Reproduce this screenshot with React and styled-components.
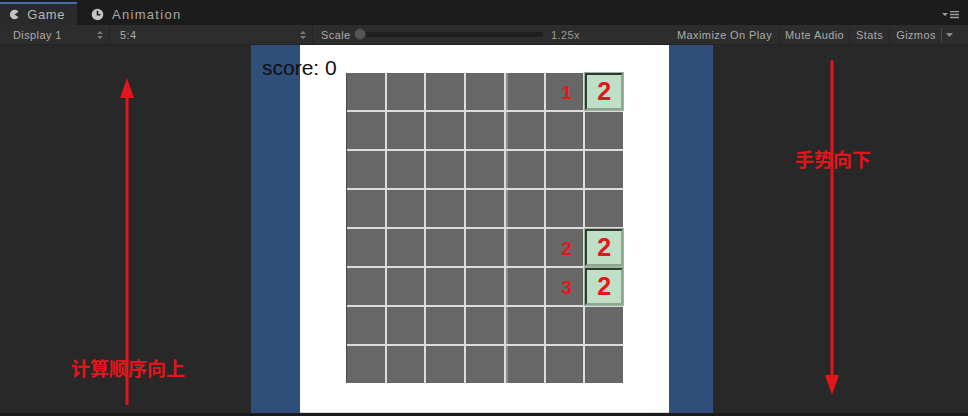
import React from "react";
import styled, { createGlobalStyle } from "styled-components";

const GlobalStyle = createGlobalStyle`
  html, body {
    margin: 0;
    padding: 0;
    background: #282828;
    overflow: hidden;
  }
  body {
    font-family: "Liberation Sans", Arial, sans-serif;
  }
`;

const ROWS = 8;
const COLS = 7;
const tiles = { "0-6": 2, "4-6": 2, "5-6": 2 };
const marks = { "0-5": 1, "4-5": 2, "5-5": 3 };

function GameIcon() {
  return (
    <svg width="13" height="13" viewBox="0 0 13 13">
      <path d="M11 3.2A5.5 5.5 0 1 0 11 9.8L6.5 6.5Z" fill="#c4c4c4" />
    </svg>
  );
}

function ClockIcon() {
  return (
    <svg width="13" height="13" viewBox="0 0 13 13">
      <circle cx="6.5" cy="6.5" r="5.8" fill="#c4c4c4" />
      <path d="M6.5 2.8V6.8H9.4" stroke="#1e1e1e" strokeWidth="1.6" fill="none" />
    </svg>
  );
}

function UpDown() {
  return (
    <svg width="6" height="10" viewBox="0 0 6 10">
      <path d="M0 4L3 1L6 4Z M0 6L3 9L6 6Z" fill="#7a7a7a" />
    </svg>
  );
}

function App() {
  return (
    <>
      <GlobalStyle />
      <Window>
        <TabBar>
          <Tab $active>
            <GameIcon />
            Game
          </Tab>
          <Tab>
            <ClockIcon />
            Animation
          </Tab>
          <TabMenu>
            <svg width="18" height="8" viewBox="0 0 18 8">
              <path d="M0 2L3 5L6 2Z" fill="#a0a0a0" />
              <path d="M8 0.5H17M8 3.5H17M8 6.5H17" stroke="#a0a0a0" strokeWidth="1.4" />
            </svg>
          </TabMenu>
        </TabBar>

        <Toolbar>
          <Dropdown $width={110} $pad={13}>
            Display 1
            <UpDown />
          </Dropdown>
          <Dropdown $width={203} $pad={10}>
            5:4
            <UpDown />
          </Dropdown>
          <ScaleGroup>
            <ScaleLabel>Scale</ScaleLabel>
            <Track>
              <Thumb />
            </Track>
            <ScaleValue>1.25x</ScaleValue>
          </ScaleGroup>
          <ToolButton $pad={7}>Maximize On Play</ToolButton>
          <ToolButton $pad={5}>Mute Audio</ToolButton>
          <ToolButton $pad={6}>Stats</ToolButton>
          <ToolButton $pad={6} $noBorder>
            Gizmos
            <GizmoArrow>
              <svg width="7" height="4" viewBox="0 0 7 4">
                <path d="M0 0L3.5 4L7 0Z" fill="#8a8a8a" />
              </svg>
            </GizmoArrow>
          </ToolButton>
        </Toolbar>

        <Main>
          <SidePane $width={251} />
          <GameView>
            <Screen>
              <Board>
                {Array.from({ length: ROWS }).map((_, r) =>
                  Array.from({ length: COLS }).map((__, c) => {
                    const key = `${r}-${c}`;
                    return (
                      <Cell key={key} $light={c === 4}>
                        {tiles[key] && <Tile>{tiles[key]}</Tile>}
                        {marks[key] && <Mark>{marks[key]}</Mark>}
                      </Cell>
                    );
                  })
                )}
              </Board>
            </Screen>
            <Score>score: 0</Score>
          </GameView>
          <SidePane $width={255} />

          <Arrows width="968" height="368" viewBox="0 0 968 368">
            <rect x="125.5" y="50" width="3" height="310" fill="#e3151c" />
            <path d="M127 33L120 53H134Z" fill="#e3151c" />
            <rect x="830.5" y="15" width="3" height="318" rx="1.5" fill="#e3151c" />
            <path d="M832 350L825 330H839Z" fill="#e3151c" />
          </Arrows>
          <Note $left={71} $top={312}>计算顺序向上</Note>
          <Note $left={795} $top={103}>手势向下</Note>
        </Main>
        <Footer />
      </Window>
    </>
  );
}

export default App;

const Window = styled.div`
  width: 968px;
  height: 416px;
  display: flex;
  flex-direction: column;
  background: #282828;
`;

const TabBar = styled.div`
  height: 25px;
  display: flex;
  align-items: flex-end;
  background: #1c1c1c;
  position: relative;
`;

const Tab = styled.div`
  height: ${(p) => (p.$active ? "21px" : "22px")};
  display: flex;
  align-items: center;
  gap: ${(p) => (p.$active ? "7px" : "8px")};
  padding: ${(p) => (p.$active ? "0 12px 0 9px" : "0 12px 0 14px")};
  width: ${(p) => (p.$active ? "56px" : "auto")};
  background: ${(p) => (p.$active ? "#2a2a2a" : "transparent")};
  border-top: ${(p) => (p.$active ? "2px solid #3f6ea8" : "none")};
  color: ${(p) => (p.$active ? "#b8b8b8" : "#a8a8a8")};
  font-size: 13px;
  letter-spacing: ${(p) => (p.$active ? "0.6px" : "1.3px")};
`;

const TabMenu = styled.div`
  position: absolute;
  right: 8px;
  top: 11px;
  display: flex;
`;

const Toolbar = styled.div`
  height: 20px;
  display: flex;
  align-items: stretch;
  background: #2d2d2d;
  border-bottom: 1px solid #232323;
  box-sizing: border-box;
  color: #ababab;
  font-size: 11px;
  letter-spacing: 0.4px;
`;

const Dropdown = styled.div`
  width: ${(p) => p.$width}px;
  box-sizing: border-box;
  display: flex;
  align-items: center;
  justify-content: space-between;
  padding: 0 6px 0 ${(p) => p.$pad}px;
  border-right: 1px solid #242424;
`;

const ScaleGroup = styled.div`
  display: flex;
  align-items: center;
  width: 357px;
  padding-left: 8px;
  box-sizing: border-box;
`;

const ScaleLabel = styled.span`
  width: 33px;
`;

const Track = styled.div`
  position: relative;
  width: 189px;
  height: 5px;
  border-radius: 3px;
  background: #1f1f1f;
  margin-right: 8px;
`;

const Thumb = styled.div`
  position: absolute;
  left: 0;
  top: -4px;
  width: 12px;
  height: 12px;
  border-radius: 50%;
  background: #555555;
  border: 1px solid #3a3a3a;
  box-sizing: border-box;
`;

const ScaleValue = styled.span`
  color: #9a9a9a;
  font-size: 11px;
`;

const ToolButton = styled.div`
  display: flex;
  align-items: center;
  padding: 0 ${(p) => p.$pad}px;
  border-right: ${(p) => (p.$noBorder ? "none" : "1px solid #242424")};
  &:first-of-type {
    border-left: 1px solid #242424;
  }
`;

const GizmoArrow = styled.span`
  display: flex;
  align-items: center;
  height: 14px;
  margin-left: 5px;
  padding-left: 4px;
  border-left: 1px solid #4a4a4a;
`;

const Main = styled.div`
  height: 368px;
  display: flex;
  position: relative;
  background: #282828;
`;

const SidePane = styled.div`
  width: ${(p) => p.$width}px;
  flex-shrink: 0;
`;

const GameView = styled.div`
  position: relative;
  width: 462px;
  flex-shrink: 0;
  display: flex;
  padding: 0 44px 0 49px;
  box-sizing: border-box;
  background: #2f4e7a;
`;

const Screen = styled.div`
  flex: 1;
  background: #ffffff;
  border-bottom: 1px solid #d8d8d8;
  display: flex;
  justify-content: center;
  padding-top: 28px;
`;

const Board = styled.div`
  width: 277px;
  height: 310px;
  display: grid;
  grid-template-columns: repeat(${COLS}, 1fr);
  grid-template-rows: repeat(${ROWS}, 1fr);
  gap: 2px;
  background: #dcdcdc;
  border-left: 1px solid #4a4a4a;
  box-sizing: border-box;
`;

const Cell = styled.div`
  background: #676767;
  display: flex;
  align-items: center;
  justify-content: center;
  box-shadow: ${(p) => (p.$light ? "inset 2px 0 0 #8c8c8c" : "none")};
`;

const Tile = styled.div`
  width: 100%;
  height: 100%;
  box-sizing: border-box;
  display: flex;
  align-items: center;
  justify-content: center;
  background: #bfe0c6;
  border: 2px solid #2f3a30;
  border-right-color: #8fa592;
  border-bottom-color: #8fa592;
  outline: 1px solid #9cb4a0;
  color: #e3151c;
  font-size: 25px;
  font-weight: bold;
  font-family: "Liberation Sans", Arial, sans-serif;
`;

const Mark = styled.span`
  color: #e3151c;
  font-size: 19px;
  font-weight: bold;
  margin-left: 4px;
  margin-top: 2px;
`;

const Score = styled.div`
  position: absolute;
  left: 11px;
  top: 12px;
  font-size: 21px;
  line-height: 1;
  color: #111111;
`;

const Arrows = styled.svg`
  position: absolute;
  left: 0;
  top: 0;
  pointer-events: none;
`;

const Note = styled.div`
  position: absolute;
  left: ${(p) => p.$left}px;
  top: ${(p) => p.$top}px;
  color: #e3151c;
  font-size: 19px;
  font-weight: bold;
  line-height: 1.2;
  font-family: "Noto Sans CJK SC", "Noto Sans", sans-serif;
  white-space: nowrap;
`;

const Footer = styled.div`
  height: 3px;
  background: #1b1b1b;
`;
